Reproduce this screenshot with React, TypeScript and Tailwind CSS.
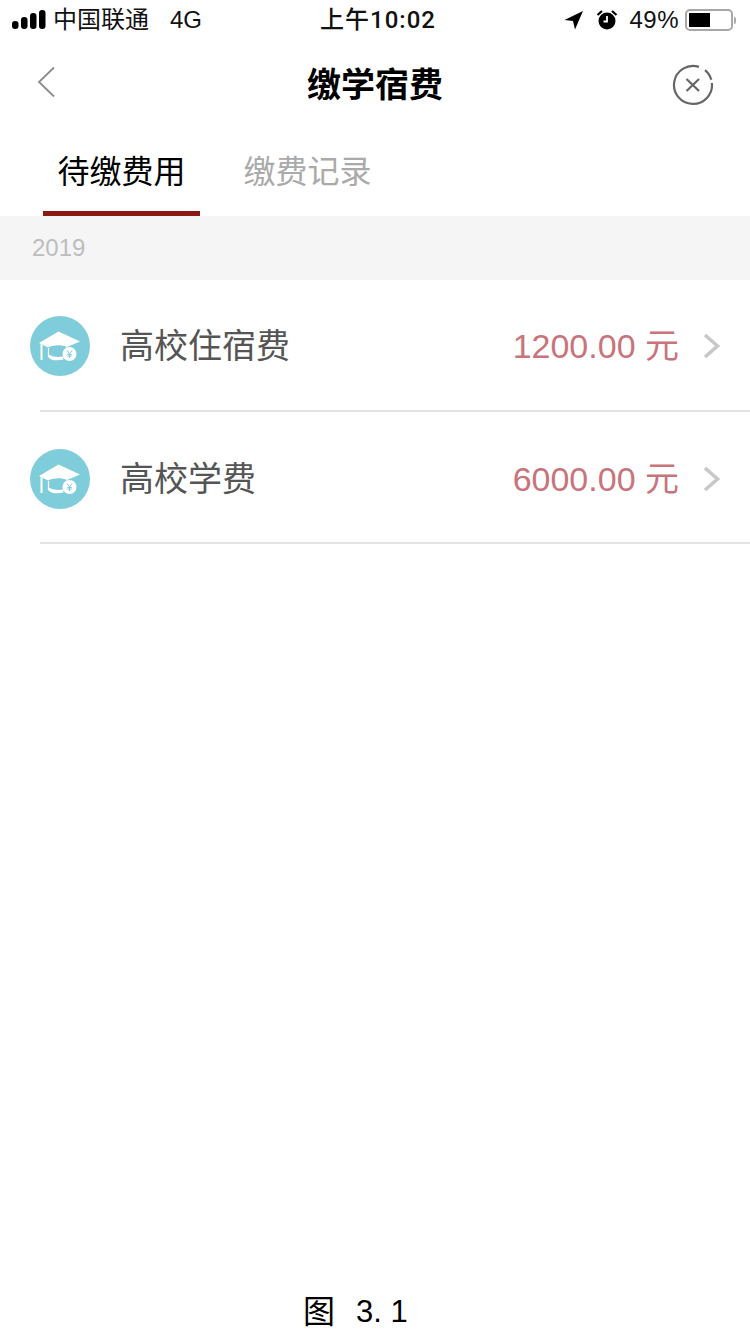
import type { ReactNode } from 'react';

const sans = "font-['Liberation_Sans','Noto_Sans_CJK_SC',sans-serif]";

const fees = [
  { name: '高校住宿费', amount: '1200.00 元', offset: 'pt-[2px]' },
  { name: '高校学费', amount: '6000.00 元', offset: 'pt-[4px]' },
];

function SignalBars() {
  return (
    <svg width="34" height="20" viewBox="0 0 34 20" fill="#000">
      <rect x="0" y="11" width="6.5" height="8" rx="3" />
      <rect x="9" y="7" width="6.5" height="12" rx="3" />
      <rect x="18" y="3" width="6.5" height="16" rx="3" />
      <rect x="27" y="0" width="6.5" height="19" rx="3" />
    </svg>
  );
}

function LocationArrow() {
  return (
    <svg width="20" height="20" viewBox="0 0 20 20" fill="#000">
      <path d="M19 1 L0.5 10 L9 11 L11 19.5 Z" />
    </svg>
  );
}

function AlarmIcon() {
  return (
    <svg width="22" height="22" viewBox="0 0 22 22">
      <circle cx="11" cy="12" r="8.5" fill="#000" />
      <path d="M11 7 V12.5 H7.5" stroke="#fff" strokeWidth="1.8" fill="none" />
      <path d="M1.5 6 L6 2 M20.5 6 L16 2" stroke="#000" strokeWidth="2.2" />
    </svg>
  );
}

function Battery() {
  return (
    <div className="flex items-center">
      <div className="w-[48px] h-[22px] rounded-[5px] border-2 border-[#a8a8a8] p-[2px]">
        <div className="w-[21px] h-full bg-black" />
      </div>
      <div className="w-[2px] h-[7px] ml-[1px] rounded-r-full bg-[#a8a8a8]" />
    </div>
  );
}

function StatusBar() {
  return (
    <div className={`relative h-10 flex items-center justify-between pl-3 pr-[14px] text-[24px] text-[#111] ${sans}`}>
      <div className="flex items-center gap-[7px]">
        <SignalBars />
        <span>中国联通</span>
        <span className="ml-[14px]">4G</span>
      </div>
      <div className="absolute left-[6px] right-0 text-center font-medium tracking-[1px] font-['Roboto','Noto_Sans_CJK_SC',sans-serif]">上午10:02</div>
      <div className="flex items-center">
        <LocationArrow />
        <span className="ml-[12px]"><AlarmIcon /></span>
        <span className="ml-[11px] mr-[6px] tracking-[0.5px]">49%</span>
        <Battery />
      </div>
    </div>
  );
}

function NavBar() {
  return (
    <div className="h-[90px] flex items-center justify-between px-[36px]">
      <div className="w-[42px] mb-[7px]">
        <svg width="20" height="32" viewBox="0 0 20 32" fill="none" stroke="#8b8b8b" strokeWidth="1.8">
          <path d="M18 1.5 L3 16 L18 30.5" />
        </svg>
      </div>
      <div className={`text-[34px] font-bold text-black ${sans}`}>缴学宿费</div>
      <svg width="42" height="42" viewBox="0 0 42 42" fill="none" stroke="#666" strokeWidth="2.2">
        <path d="M26.9 2.9 A19 19 0 1 0 39.9 19" />
        <path d="M33 6.2 A19 19 0 0 1 39.3 15.8" />
        <path d="M14.5 15 L27 27 M27 15 L14.5 27" />
      </svg>
    </div>
  );
}

function Tab({ active, children }: { active?: boolean; children: ReactNode }) {
  return (
    <div
      className={`w-[157px] h-[86px] flex items-center justify-center pt-[2px] text-[32px] border-b-[5px] ${
        active ? 'text-black border-[#8b1a16]' : 'text-[#aaaaaa] border-transparent'
      }`}
    >
      {children}
    </div>
  );
}

function CapIcon() {
  return (
    <div className="w-[60px] h-[60px] rounded-full bg-[#7fcdda] flex items-center justify-center shrink-0">
      <svg width="44" height="36" viewBox="0 0 44 36" fill="#fff">
        {/* board and tassel */}
        <path d="M20.5 3.5 L42 13.5 L29 19 C24 16.5 16 16.5 10 19.5 L1 15 Z" />
        <path d="M2.5 16 L4.5 17 V32 H2.5 Z" />
        {/* dome outline and filled brim */}
        <path d="M10.5 20 V29 M28.5 19.5 V21.5" fill="none" stroke="#fff" strokeWidth="1.2" />
        <path d="M10.5 26.5 C15 29 21 29.5 25 28.5 L25.5 31.5 C20 33 13 32.5 10.5 29.5 Z" />
        {/* yuan coin */}
        <circle cx="31.5" cy="26" r="7" />
        <path d="M29 22.5 L31.5 26 L34 22.5 M31.5 26 V30 M29.3 26.5 H33.7 M29.3 28 H33.7" stroke="#7fcdda" strokeWidth="1" fill="none" />
      </svg>
    </div>
  );
}

function FeeRow({ name, amount, offset }: { name: string; amount: string; offset: string }) {
  return (
    <div className="h-[132px] flex flex-col">
      <div className={`flex-1 flex items-center pl-[30px] pr-[29px] ${offset}`}>
        <CapIcon />
        <div className="ml-[30px] text-[34px] text-[#555555]">{name}</div>
        <div className="ml-auto text-[34px] text-[#c9737b]">{amount}</div>
        <svg className="ml-[24px]" width="18" height="26" viewBox="0 0 18 26" fill="none" stroke="#c8c8c8" strokeWidth="3.6">
          <path d="M2 2 L14.5 13 L2 24" />
        </svg>
      </div>
      <div className="ml-10 h-[2px] bg-[#e3e3e3]" />
    </div>
  );
}

export default function App() {
  return (
    <div className={`w-[750px] h-[1334px] bg-white overflow-hidden flex flex-col ${sans}`}>
      <StatusBar />
      <NavBar />
      <div className="flex pl-[43px] gap-[29px] h-[86px]">
        <Tab active>待缴费用</Tab>
        <Tab>缴费记录</Tab>
      </div>
      <div className="h-16 bg-[#f5f5f5] flex items-center pl-8 text-[24px] text-[#bdbdbd]">2019</div>
      {fees.map((fee) => (
        <FeeRow key={fee.name} name={fee.name} amount={fee.amount} offset={fee.offset} />
      ))}
      <div className="mt-auto mb-[-2px] pl-[303px] flex items-center text-[31px] text-black">
        <span className="text-[32px]">图</span>
        <span className="ml-[21px] whitespace-pre">3. 1</span>
      </div>
    </div>
  );
}
